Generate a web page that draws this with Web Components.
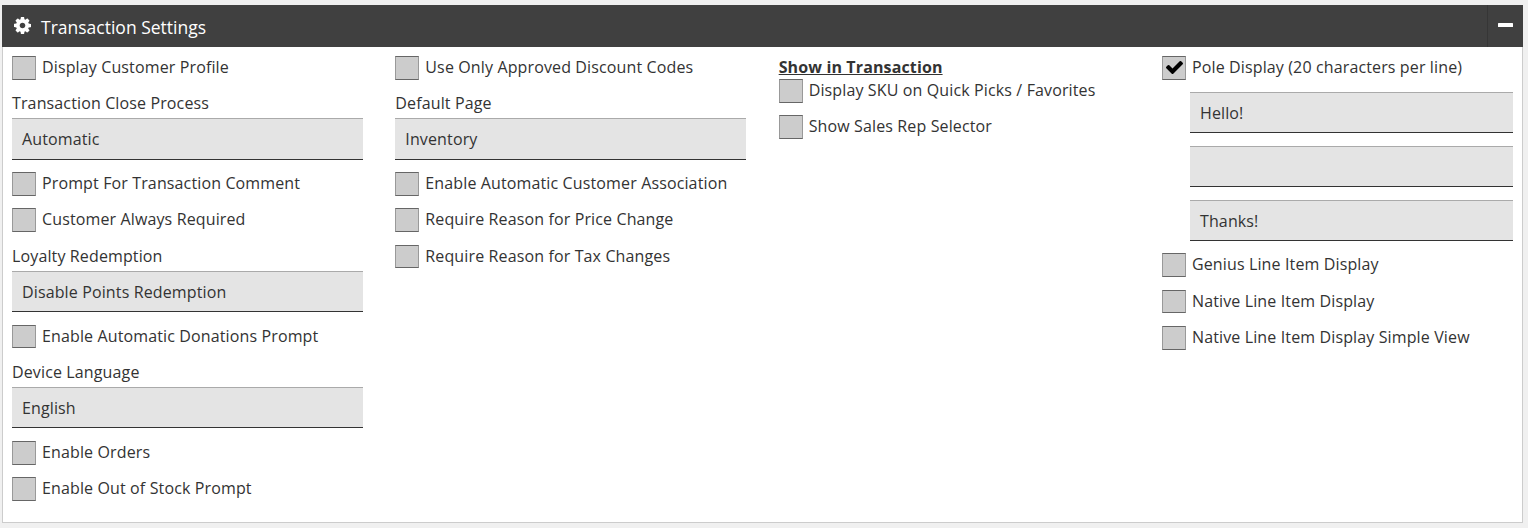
<!DOCTYPE html>
<html lang="en">
<head>
<meta charset="utf-8">
<title>Transaction Settings</title>
<style>
  html, body {
    margin: 0;
    height: 100%;
  }

  body {
    box-sizing: border-box;
    padding: 5px 5px 5px 2px;
    background: #f0f0f0;
    color: #333;
    font-family: "Open Sans", sans-serif;
    font-size: 16px;
    letter-spacing: 0.13px;
    overflow: hidden;
  }
</style>
</head>
<body>
<settings-panel heading="Transaction Settings">
  <settings-column>
    <check-option>Display Customer Profile</check-option>
    <select-field label="Transaction Close Process">Automatic</select-field>
    <check-option>Prompt For Transaction Comment</check-option>
    <check-option>Customer Always Required</check-option>
    <select-field label="Loyalty Redemption">Disable Points Redemption</select-field>
    <check-option>Enable Automatic Donations Prompt</check-option>
    <select-field label="Device Language">English</select-field>
    <check-option>Enable Orders</check-option>
    <check-option>Enable Out of Stock Prompt</check-option>
  </settings-column>
  <settings-column>
    <check-option>Use Only Approved Discount Codes</check-option>
    <select-field label="Default Page">Inventory</select-field>
    <check-option>Enable Automatic Customer Association</check-option>
    <check-option>Require Reason for Price Change</check-option>
    <check-option>Require Reason for Tax Changes</check-option>
  </settings-column>
  <settings-column heading="Show in Transaction">
    <check-option>Display SKU on Quick Picks / Favorites</check-option>
    <check-option>Show Sales Rep Selector</check-option>
  </settings-column>
  <settings-column>
    <check-option checked>Pole Display (20 characters per line)</check-option>
    <pole-lines>
      <text-box>Hello!</text-box>
      <text-box></text-box>
      <text-box>Thanks!</text-box>
    </pole-lines>
    <check-option>Genius Line Item Display</check-option>
    <check-option>Native Line Item Display</check-option>
    <check-option>Native Line Item Display Simple View</check-option>
  </settings-column>
</settings-panel>

<script>
class SettingsPanel extends HTMLElement {
  constructor() {
    super();
    this.shadow = this.attachShadow({ mode: "open" });
  }

  connectedCallback() {
    this.render();
    this.shadow.querySelector("button").addEventListener("click", () => {
      let body = this.shadow.querySelector(".body");
      body.hidden = !body.hidden;
    });
  }

  render() {
    this.shadow.innerHTML = `
    <style>
      :host {
        display: flex;
        flex-direction: column;
        height: 100%;
      }

      header {
        display: flex;
        align-items: center;
        height: 42px;
        flex: none;
        background: #404040;
        color: #fff;
      }

      .gear {
        width: 17px;
        height: 17px;
        margin: 0 10px 1px 12px;
      }

      h2 {
        flex: 1;
        margin: 0;
        padding-top: 2px;
        font-size: 17.5px;
        font-weight: 400;
        letter-spacing: 0;
        line-height: 24px;
      }

      button {
        display: flex;
        align-items: center;
        justify-content: center;
        width: 36px;
        height: 42px;
        padding: 0 1px 2px 0;
        border: 0;
        border-left: 1px solid #363636;
        background: none;
        cursor: pointer;
      }

      .body {
        box-sizing: border-box;
        flex: 1;
        display: grid;
        grid-template-columns: repeat(4, 351px);
        justify-content: space-between;
        align-items: start;
        padding: 9px 9px 0;
        border: 1px solid #ccc;
        border-top: 0;
        background: #fff;
      }

      .body[hidden] {
        display: none;
      }
    </style>
    <header>
      <svg class="gear" viewBox="0 0 1536 1536" fill="#fff">
        <path d="M1024 768q0-106-75-181t-181-75-181 75-75 181 75 181 181 75 181-75 75-181zm512-109v222q0 12-8 23t-20 13l-185 28q-19 54-39 91 35 50 107 138 10 12 10 25t-9 23q-27 37-99 108t-94 71q-12 0-26-9l-138-108q-44 23-91 38-16 136-29 186-7 28-36 28H657q-14 0-24.500-8.500T621 1506l-28-184q-49-16-90-37l-141 107q-10 9-25 9-14 0-25-11-126-114-165-168-7-10-7-23 0-12 8-23 15-21 51-66.500t54-70.500q-27-50-41-99L29 913q-13-2-21-12.500T0 877V655q0-12 8-23t19-13l186-28q14-46 39-92-40-57-107-138-10-12-10-24 0-10 9-23 26-36 98.500-107.500T337 135q13 0 26 10l138 107q44-23 91-38 16-136 29-186 7-28 36-28h222q14 0 24.500 8.500T915 30l28 184q49 16 90 37l142-107q9-9 24-9 13 0 25 10 129 119 165 170 7 8 7 22 0 12-8 23-15 21-51 66.500t-54 70.500q26 50 41 98l183 28q13 2 21 12.500t8 23.500z"/>
      </svg>
      <h2>${this.getAttribute("heading")}</h2>
      <button aria-label="Collapse">
        <svg width="15" height="4"><rect width="15" height="4" rx="0.5" fill="#fff"/></svg>
      </button>
    </header>
    <div class="body"><slot></slot></div>
    `;
  }
}

class SettingsColumn extends HTMLElement {
  constructor() {
    super();
    this.shadow = this.attachShadow({ mode: "open" });
  }

  connectedCallback() {
    let heading = this.getAttribute("heading");
    this.shadow.innerHTML = `
    <style>
      :host {
        display: flex;
        flex-direction: column;
      }

      h3 {
        margin: 0;
        font-size: 16px;
        font-weight: 700;
        line-height: 23px;
        text-decoration: underline;
      }
    </style>
    ${heading ? `<h3>${heading}</h3>` : ""}
    <slot></slot>
    `;
  }
}

class CheckOption extends HTMLElement {
  constructor() {
    super();
    this.shadow = this.attachShadow({ mode: "open" });
  }

  static get observedAttributes() {
    return ["checked"];
  }

  attributeChangedCallback() {
    this.render();
  }

  connectedCallback() {
    this.render();
    this.addEventListener("click", () => this.toggleAttribute("checked"));
  }

  render() {
    this.shadow.innerHTML = `
    <style>
      :host {
        display: flex;
        gap: 6px;
        height: 36.2px;
        cursor: pointer;
      }

      .box {
        box-sizing: border-box;
        display: flex;
        align-items: center;
        justify-content: center;
        flex: none;
        width: 24px;
        height: 23.8px;
        border: 1px solid #999;
        border-top-color: #666;
        border-bottom-color: #666;
        background: #ccc;
      }

      .box svg {
        margin: 0 0 1px 1px;
      }

      .label {
        line-height: 22px;
        white-space: nowrap;
      }
    </style>
    <span class="box">
      ${this.hasAttribute("checked") ? `<svg width="17" height="13" viewBox="121 334 1550 1188"><path d="M1671 566q0 40-28 68l-724 724-136 136q-28 28-68 28t-68-28l-136-136-362-362q-28-28-28-68t28-68l136-136q28-28 68-28t68 28l294 295 656-657q28-28 68-28t68 28l136 136q28 28 28 68z"/></svg>` : ""}
    </span>
    <span class="label"><slot></slot></span>
    `;
  }
}

class TextBox extends HTMLElement {
  constructor() {
    super();
    this.shadow = this.attachShadow({ mode: "open" });
    this.shadow.innerHTML = `
    <style>
      :host {
        box-sizing: border-box;
        display: block;
        height: 41px;
        padding: 0 10px;
        border-top: 1px solid #aaa;
        border-bottom: 1px solid #333;
        background: #e4e4e4;
        line-height: 40px;
      }
    </style>
    <slot></slot>
    `;
  }
}

class SelectField extends HTMLElement {
  constructor() {
    super();
    this.shadow = this.attachShadow({ mode: "open" });
  }

  connectedCallback() {
    this.shadow.innerHTML = `
    <style>
      :host {
        display: block;
        height: 80px;
      }

      label {
        display: block;
        height: 26px;
        line-height: 22px;
      }

      text-box {
        height: 41.4px;
      }
    </style>
    <label>${this.getAttribute("label")}</label>
    <text-box><slot></slot></text-box>
    `;
  }
}

class PoleLines extends HTMLElement {
  constructor() {
    super();
    this.shadow = this.attachShadow({ mode: "open" });
    this.shadow.innerHTML = `
    <style>
      :host {
        display: grid;
        gap: 13px;
        margin-left: 28px;
        padding-bottom: 12.2px;
      }
    </style>
    <slot></slot>
    `;
  }
}

window.customElements.define("settings-panel", SettingsPanel);
window.customElements.define("settings-column", SettingsColumn);
window.customElements.define("check-option", CheckOption);
window.customElements.define("text-box", TextBox);
window.customElements.define("select-field", SelectField);
window.customElements.define("pole-lines", PoleLines);
</script>
</body>
</html>
